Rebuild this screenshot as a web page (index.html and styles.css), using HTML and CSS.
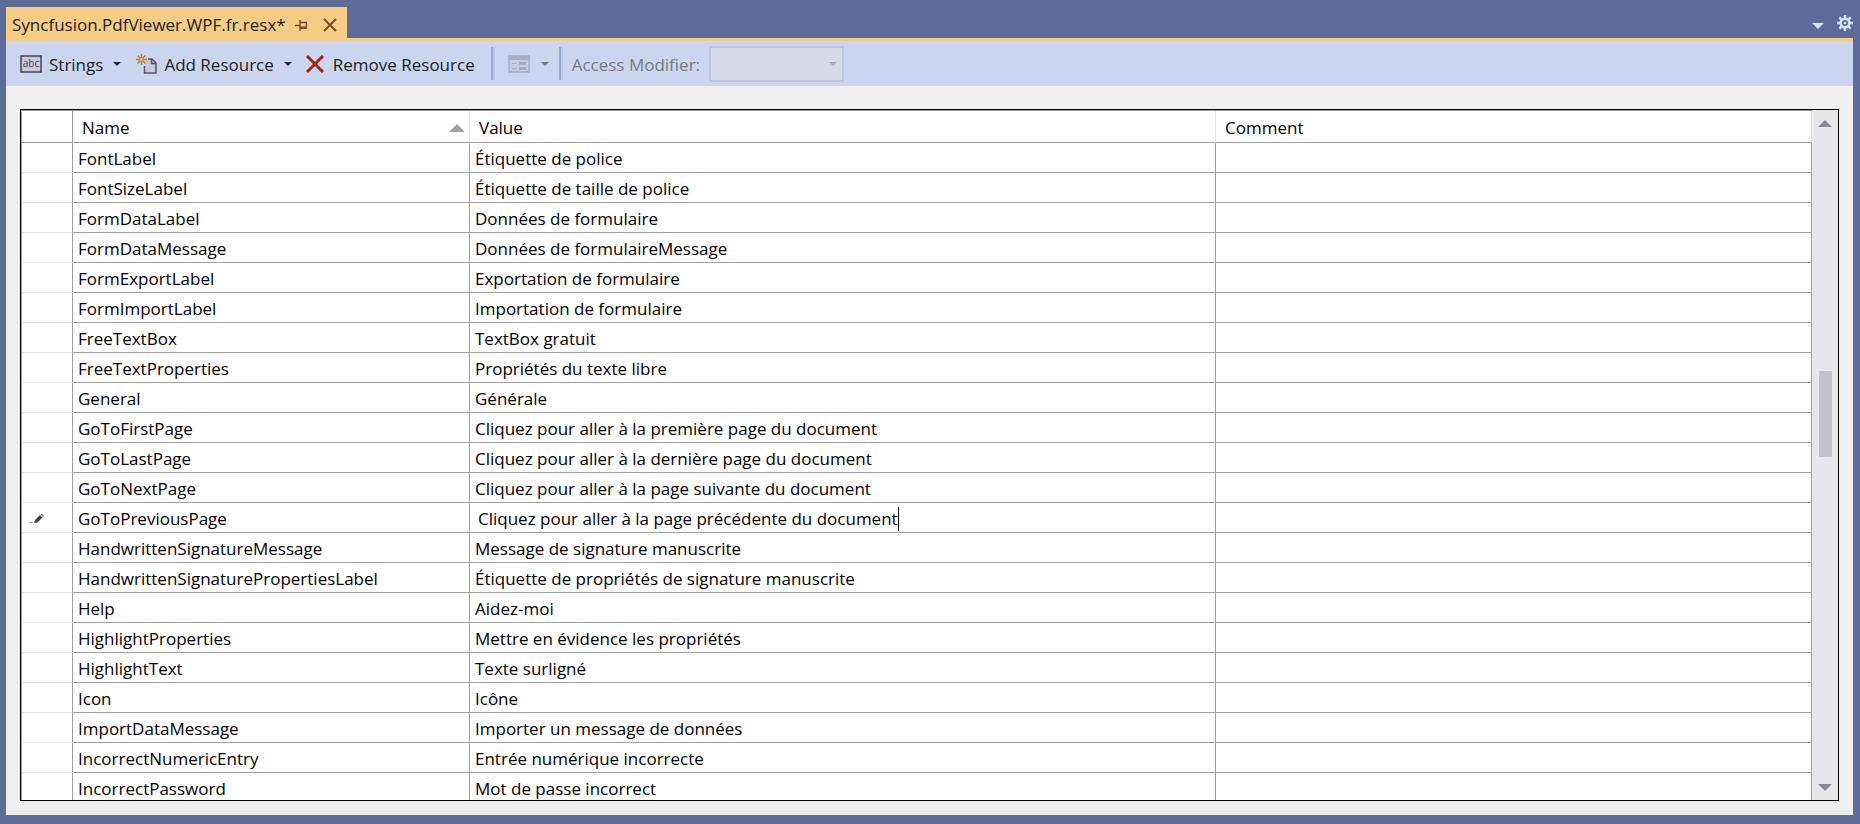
FILE: index.html
```
<!DOCTYPE html>
<html lang="fr">
<head>
<meta charset="utf-8">
<title>Syncfusion.PdfViewer.WPF.fr.resx</title>
<link rel="stylesheet" href="styles.css">
</head>
<body>
<header class="tabs">
  <div class="tab">
    <span class="tab-title">Syncfusion.PdfViewer.WPF.fr.resx*</span>
    <button class="icon-btn pin" aria-label="Pin"><svg width="12" height="12" viewBox="0 0 12 12"><path d="M0 6.500h5M5 1v11M5 3.500h6.500v6" fill="none" stroke="#7a4a26" stroke-width="1.400"/><path d="M5 7.500h7v2.500H5z" fill="#7a4a26"/></svg></button>
    <button class="icon-btn close" aria-label="Close"><svg width="14" height="14" viewBox="0 0 14 14"><path d="M1 1l12 12M13 1L1 13" fill="none" stroke="#7a4a26" stroke-width="2"/></svg></button>
  </div>
  <div class="window-tools">
    <button class="icon-btn files" aria-label="Active files"><svg width="12" height="6" viewBox="0 0 12 6"><path d="M0 0h12L6 6z" fill="#dde4fa"/></svg></button>
    <button class="icon-btn gear" aria-label="Settings"><svg width="16" height="16" viewBox="0 0 16 16"><g stroke="#dde4fa" fill="none"><circle cx="8" cy="8" r="4.300" stroke-width="2.400"/><path d="M8 0v3M8 13v3M0 8h3M13 8h3M2.400 2.400l2 2M11.600 11.600l2 2M13.600 2.400l-2 2M4.400 11.600l-2 2" stroke-width="2.500"/></g><circle cx="8" cy="8" r="1.300" fill="#dde4fa"/></svg></button>
  </div>
</header>
<div class="toolbar">
  <button class="tool">
    <svg width="22" height="18" viewBox="0 0 22 18"><rect x="1" y="1" width="20" height="16" fill="#cac8e2" stroke="#444448" stroke-width="1.500"/><text x="11" y="12" class="abc">abc</text></svg>
    <span>Strings</span>
    <svg class="arrow" width="8" height="4" viewBox="0 0 8 4"><path d="M0 0h8L4 4z" fill="#1b293e"/></svg>
  </button>
  <button class="tool add">
    <svg width="21" height="20" viewBox="0 0 21 20"><path d="M8.500 12v7H20V9l-4-4h-4z" fill="#cac8e2"/><path d="M8.500 12v7H20V9l-4-4h-4" fill="none" stroke="#55555a" stroke-width="1.500"/><path d="M15.500 5v4.500H20" fill="none" stroke="#55555a" stroke-width="1.500"/><path d="M5.500 0v11M0 5.500h11M1.600 1.600l7.800 7.800M9.400 1.600L1.600 9.400" stroke="#c27d1a" stroke-width="1.400"/><circle cx="5.500" cy="5.500" r="1.200" fill="#cbd5ef"/></svg>
    <span>Add Resource</span>
    <svg class="arrow" width="8" height="4" viewBox="0 0 8 4"><path d="M0 0h8L4 4z" fill="#1b293e"/></svg>
  </button>
  <button class="tool remove">
    <svg width="18" height="18" viewBox="0 0 18 18"><path d="M1 1l16 16M17 1L1 17" stroke="#a1260d" stroke-width="3"/></svg>
    <span>Remove Resource</span>
  </button>
  <span class="divider"></span>
  <button class="tool view" disabled aria-label="View">
    <svg width="22" height="18" viewBox="0 0 22 18"><rect x="1" y="1" width="20" height="16" fill="#c6cbe0" stroke="#a6adc6" stroke-width="1.500"/><path d="M1 1h20v4H1zM11 7h7v3h-7zM11 12h7v3h-7zM4 8h5v1H4zM4 13h5v1H4z" fill="#a6adc6"/></svg>
    <svg class="arrow" width="8" height="4" viewBox="0 0 8 4"><path d="M0 0h8L4 4z" fill="#77787e"/></svg>
  </button>
  <span class="divider"></span>
  <label class="modifier" for="access">Access Modifier:</label>
  <div class="select-wrap">
    <select id="access" disabled></select>
    <svg width="8" height="4" viewBox="0 0 8 4"><path d="M0 0h8L4 4z" fill="#a5abba"/></svg>
  </div>
</div>
<main class="content">
  <div class="grid">
    <div class="viewport">
      <table>
        <colgroup><col class="c-mark"><col class="c-name"><col class="c-value"><col></colgroup>
        <thead><tr><th></th><th><span class="sorted">Name<svg width="16" height="8" viewBox="0 0 16 8"><path d="M0 8h16L8 0z" fill="#a0a0a0"/></svg></span></th><th>Value</th><th>Comment</th></tr></thead>
        <tbody>
          <tr><th></th><td>FontLabel</td><td>Étiquette de police</td><td></td></tr>
          <tr><th></th><td>FontSizeLabel</td><td>Étiquette de taille de police</td><td></td></tr>
          <tr><th></th><td>FormDataLabel</td><td>Données de formulaire</td><td></td></tr>
          <tr><th></th><td>FormDataMessage</td><td>Données de formulaireMessage</td><td></td></tr>
          <tr><th></th><td>FormExportLabel</td><td>Exportation de formulaire</td><td></td></tr>
          <tr><th></th><td>FormImportLabel</td><td>Importation de formulaire</td><td></td></tr>
          <tr><th></th><td>FreeTextBox</td><td>TextBox gratuit</td><td></td></tr>
          <tr><th></th><td>FreeTextProperties</td><td>Propriétés du texte libre</td><td></td></tr>
          <tr><th></th><td>General</td><td>Générale</td><td></td></tr>
          <tr><th></th><td>GoToFirstPage</td><td>Cliquez pour aller à la première page du document</td><td></td></tr>
          <tr><th></th><td>GoToLastPage</td><td>Cliquez pour aller à la dernière page du document</td><td></td></tr>
          <tr><th></th><td>GoToNextPage</td><td>Cliquez pour aller à la page suivante du document</td><td></td></tr>
          <tr><th><svg class="pencil" width="15" height="10" viewBox="0 0 15 10"><path d="M0 8.500h4" stroke="#999" stroke-width="1"/><path d="M5 9l1-3 5-5 2.500 2.500-5 5z" fill="#444"/><path d="M12 0l2.500 2.500" stroke="#777" stroke-width="1.500"/></svg></th><td>GoToPreviousPage</td><td class="editing"><div class="editor"><input aria-label="Value" value="Cliquez pour aller à la page précédente du document"><span class="caret"></span></div></td><td></td></tr>
          <tr><th></th><td>HandwrittenSignatureMessage</td><td>Message de signature manuscrite</td><td></td></tr>
          <tr><th></th><td>HandwrittenSignaturePropertiesLabel</td><td>Étiquette de propriétés de signature manuscrite</td><td></td></tr>
          <tr><th></th><td>Help</td><td>Aidez-moi</td><td></td></tr>
          <tr><th></th><td>HighlightProperties</td><td>Mettre en évidence les propriétés</td><td></td></tr>
          <tr><th></th><td>HighlightText</td><td>Texte surligné</td><td></td></tr>
          <tr><th></th><td>Icon</td><td>Icône</td><td></td></tr>
          <tr><th></th><td>ImportDataMessage</td><td>Importer un message de données</td><td></td></tr>
          <tr><th></th><td>IncorrectNumericEntry</td><td>Entrée numérique incorrecte</td><td></td></tr>
          <tr><th></th><td>IncorrectPassword</td><td>Mot de passe incorrect</td><td></td></tr>
        </tbody>
      </table>
    </div>
    <div class="scrollbar">
      <button class="icon-btn" aria-label="Scroll up"><svg width="14" height="7" viewBox="0 0 14 7"><path d="M0 7h14L7 0z" fill="#868999"/></svg></button>
      <div class="track"><div class="before"></div><div class="thumb"></div><div class="after"></div></div>
      <button class="icon-btn" aria-label="Scroll down"><svg width="14" height="7" viewBox="0 0 14 7"><path d="M0 0h14L7 7z" fill="#868999"/></svg></button>
    </div>
  </div>
</main>
</body>
</html>
```
FILE: styles.css
```
* {
  box-sizing: border-box;
}

body {
  margin: 0;
  height: 100vh;
  padding: 7px 7px 9px 6px;
  display: flex;
  flex-direction: column;
  background: #5d6b99;
  color: #000;
  font: 17px/24px "Open Sans", "Noto Sans", sans-serif;
}

button,
input,
select {
  font: inherit;
  color: inherit;
  margin: 0;
  padding: 0;
  border: 0;
  background: none;
}

svg {
  display: block;
  flex: none;
}

.icon-btn {
  display: flex;
}

.tabs {
  display: flex;
  justify-content: space-between;
  border-bottom: 3px solid #f5cc84;
}

.tab {
  display: flex;
  align-items: center;
  height: 31px;
  padding: 4px 10px 0 6px;
  background: #f5cc84;
  color: #1e1e1e;
}

.pin {
  margin-left: 9px;
}

.close {
  margin-left: 16px;
}

.window-tools {
  display: flex;
  align-items: center;
  gap: 13px;
}

.files {
  margin-top: 6px;
}

.toolbar {
  display: flex;
  align-items: center;
  height: 45px;
  padding-left: 14px;
  background: #cbd5ef;
  color: #1e1e1e;
}

.tool {
  display: flex;
  align-items: center;
  gap: 7px;
}

.tool span,
.modifier {
  padding-top: 2px;
}

.arrow {
  margin-left: 3px;
}

.add {
  margin-left: 15px;
}

.remove {
  margin-left: 14px;
  gap: 9px;
}

.abc {
  font: 10px "Open Sans", sans-serif;
  text-anchor: middle;
  fill: #444448;
}

.divider {
  width: 4px;
  height: 33px;
  margin-left: 16px;
  border-left: 2px solid #96a9d2;
  border-right: 2px solid #bcc8e8;
}

.view {
  margin-left: 13px;
  gap: 8px;
}

.view + .divider {
  margin-left: 10px;
}

.modifier {
  margin-left: 9px;
  color: #7a7a7e;
}

.select-wrap {
  display: grid;
  align-items: center;
  margin-left: 9px;
}

.select-wrap > * {
  grid-area: 1 / 1;
}

.select-wrap select {
  appearance: none;
  width: 135px;
  height: 36px;
  border: 2px solid #bcc5dc;
  border-radius: 0;
  background: #d5dbe7;
  opacity: 1;
}

.select-wrap svg {
  justify-self: end;
  margin-right: 7px;
}

.content {
  flex: 1;
  min-height: 0;
  display: flex;
  padding: 23px 14px 14px;
  background: #efefef;
}

.grid {
  flex: 1;
  min-width: 0;
  display: flex;
  border: 1px solid #000;
  background: #fff;
}

.viewport {
  flex: 1;
  min-width: 0;
  overflow: hidden;
  border-top: 1px solid #a0a0a0;
  border-left: 1px solid #a0a0a0;
}

table {
  width: 100%;
  table-layout: fixed;
  border-collapse: separate;
  border-spacing: 0;
}

.c-mark {
  width: 51px;
}

.c-name {
  width: 397px;
}

.c-value {
  width: 746px;
}

th,
td {
  height: 30px;
  padding: 2px 5px 0;
  border-right: 1px solid #a0a0a0;
  border-bottom: 1px solid #a0a0a0;
  font-weight: 400;
  text-align: left;
  white-space: nowrap;
  line-height: 24px;
}

thead th {
  height: 32px;
  padding: 3px 9px 0;
  border-right-color: #e3e3e3;
}

thead th:first-child {
  border-right-color: #a0a0a0;
}

tbody th {
  border-bottom-color: #e3e3e3;
}

.sorted {
  display: flex;
  align-items: center;
  justify-content: space-between;
  margin-right: -5px;
}

.pencil {
  margin-left: 2px;
}

.editing {
  padding: 2px 8px 0;
}

.editor {
  display: flex;
  align-items: center;
}

.editor input {
  field-sizing: content;
  height: 24px;
  outline: 0;
}

.caret {
  width: 1px;
  height: 24px;
  background: #000;
}

.scrollbar {
  width: 26px;
  display: flex;
  flex-direction: column;
  align-items: center;
  padding: 10px 0 9px;
  background: #e7e6eb;
}

.track {
  flex: 1;
  display: flex;
  flex-direction: column;
  padding: 10px 0;
}

.before {
  flex: 234;
}

.thumb {
  flex: 86;
  width: 13px;
  background: #c2c3c9;
}

.after {
  flex: 317;
}
```
